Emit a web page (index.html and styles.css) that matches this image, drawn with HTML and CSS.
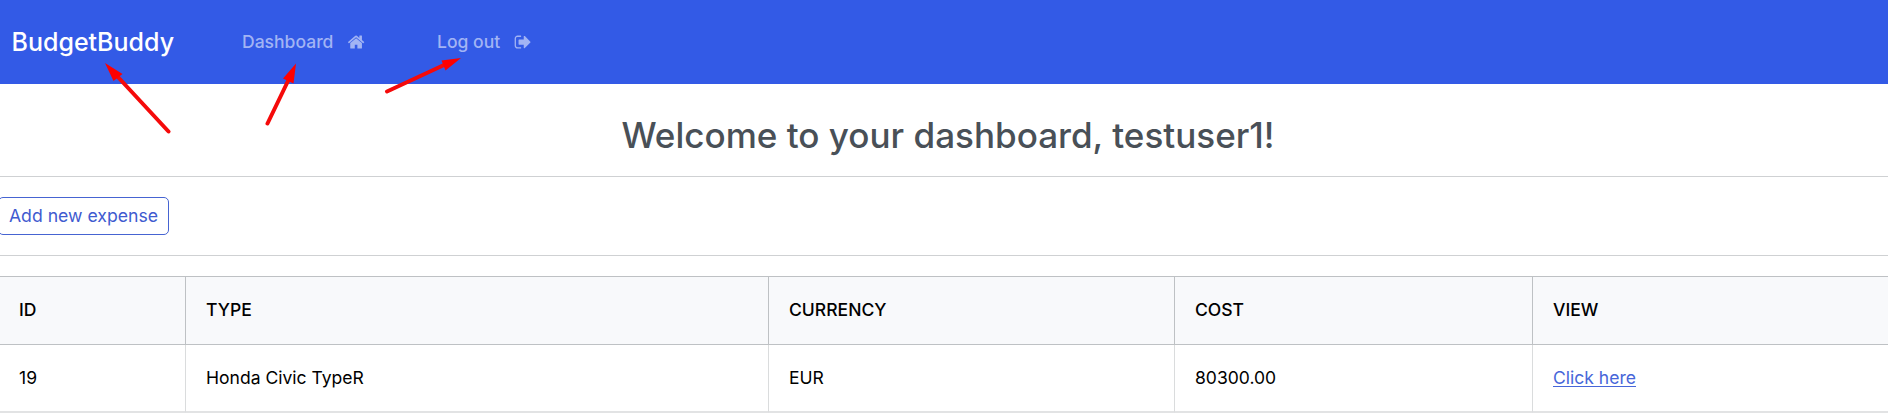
FILE: index.html
```
<!DOCTYPE html>
<html lang="en">
<head>
<meta charset="utf-8">
<title>BudgetBuddy</title>
<link rel="stylesheet" href="styles.css">
</head>
<body>
<nav class="navbar">
  <a class="brand">BudgetBuddy</a>
  <a class="nav-link dashboard"><span>Dashboard</span>
    <svg class="icon" viewBox="0 0 1792 1792"><path d="M1472 992v480q0 26-19 45t-45 19h-384v-384h-256v384h-384q-26 0-45-19t-19-45v-480q0-1 .5-3t.5-3l575-474 575 474q1 2 1 6zm223-69l-62 74q-8 9-21 11h-3q-13 0-21-7l-692-577-692 577q-12 8-24 7-13-2-21-11l-62-74q-8-10-7-23.5t11-21.5l719-599q32-26 76-26t76 26l244 204v-195q0-14 9-23t23-9h192q14 0 23 9t9 23v408l219 182q10 8 11 21.5t-7 23.500z"/></svg></a>
  <a class="nav-link logout"><span>Log out</span>
    <svg class="icon" viewBox="0 0 1792 1792"><path d="M704 1440q0 4 1 20t.5 26.500-3 23.500-10 19.500-20.500 6.500h-320q-119 0-203.500-84.500t-84.500-203.500v-704q0-119 84.500-203.500t203.500-84.500h320q13 0 22.500 9.500t9.500 22.500q0 4 1 20t.5 26.500-3 23.500-10 19.500-20.500 6.500h-320q-66 0-113 47t-47 113v704q0 66 47 113t113 47h312l11.500 1 11.500 3 8 5.500 7 9 2 13.500zm928-544q0 26-19 45l-544 544q-19 19-45 19t-45-19-19-45v-288h-448q-26 0-45-19t-19-45v-384q0-26 19-45t45-19h448v-288q0-26 19-45t45-19 45 19l544 544q19 19 19 45z"/></svg></a>
</nav>
<svg class="arrows" viewBox="0 0 560 150">
  <g stroke="#f50a0a" stroke-width="4" stroke-linecap="round"><path d="M168.500 131.500 117 76M267.500 123.500 288 81M387 91.500 444 65"/></g>
  <g fill="#fe0000"><path d="M105 63 122.500 74 113.500 81zM296 63.500 293.500 83.500 283 78.500zM461 58 445.500 70.500 441.500 60.500z"/></g>
</svg>
<main>
  <h1 class="title">Welcome to your dashboard, testuser1!</h1>
  <div class="toolbar"><button class="add">Add new expense</button></div>
  <table class="expenses">
    <colgroup><col class="c-id"><col class="c-type"><col class="c-currency"><col class="c-cost"><col></colgroup>
    <thead><tr><th>ID</th><th>TYPE</th><th>CURRENCY</th><th>COST</th><th>VIEW</th></tr></thead>
    <tbody><tr><td>19</td><td>Honda Civic TypeR</td><td>EUR</td><td>80300.00</td><td><a class="link">Click here</a></td></tr></tbody>
  </table>
</main>
</body>
</html>
```
FILE: styles.css
```
* { box-sizing: border-box; }
body { margin: 0; background: #fff; color: #000; font: 400 17.55px/24px Inter, sans-serif; overflow: hidden; }
.navbar { display: flex; align-items: center; height: 84px; padding-left: 11.500px; background: #335ae6; }
.brand { width: 230.500px; color: #fff; font-size: 25px; font-weight: 500; }
.nav-link { display: flex; align-items: center; gap: 13.500px; color: #a2b4f4; font-weight: 500; }
.dashboard { width: 195px; }
.icon { width: 18.200px; height: 18.200px; fill: currentColor; }
.arrows { position: absolute; left: 0; top: 0; width: 560px; height: 150px; }
.title { height: 93px; margin: 0; padding: 29px 0 0 8px; border-bottom: 1px solid #cfd1d3; color: #495057; font-size: 35.050px; line-height: 44px; font-weight: 500; text-align: center; }
.toolbar { height: 79px; padding-top: 20px; border-bottom: 1px solid #cfd1d3; }
.add { display: block; width: 171px; height: 38px; margin-left: -2px; padding: 0; border: 1px solid #4664d2; border-radius: 5px; background: #fff; color: #3f5bd0; font: inherit; font-size: 17.650px; }
.expenses { width: 100%; height: 137px; margin-top: 20px; table-layout: fixed; border-collapse: separate; border-spacing: 0; border-top: 1px solid #bec1c4; }
.c-id { width: 186px; }
.c-type { width: 583px; }
.c-currency { width: 406px; }
.c-cost { width: 358px; }
th, td { padding: 0 20px; text-align: left; border-right: 1px solid #dadcdd; }
th:first-child, td:first-child { padding-left: 19px; }
th:last-child, td:last-child { border-right: 0; }
th { height: 68px; padding-bottom: 1px; background: #f8f9fb; border-color: #bec1c4; border-bottom: 1px solid #bec1c4; font-weight: 500; }
td { height: 68px; border-bottom: 2px solid #e2e3e4; }
.link { color: #4766d9; text-decoration: underline; text-underline-offset: 2px; }
```
